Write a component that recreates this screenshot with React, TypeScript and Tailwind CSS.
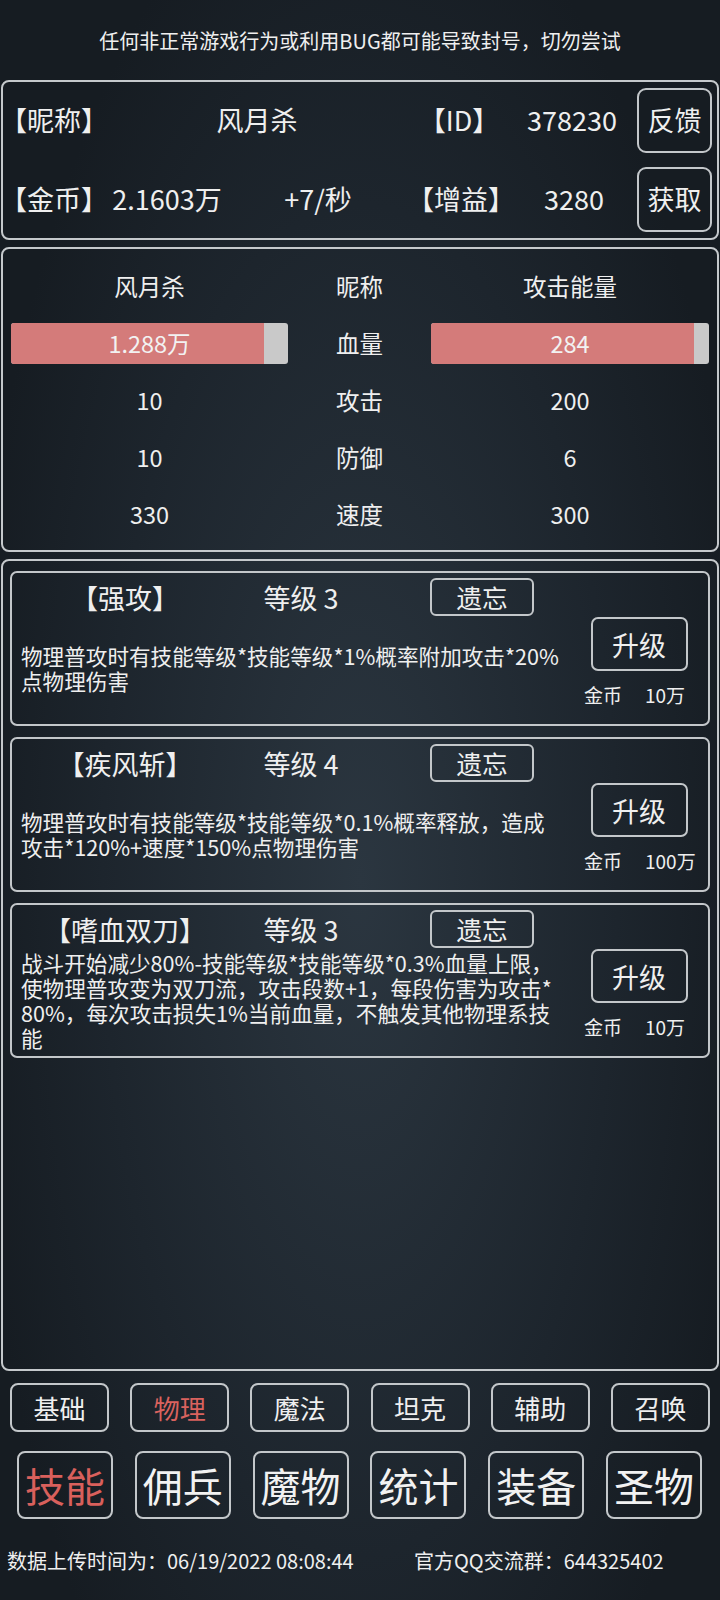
const skills = [
  {
    name: "【强攻】",
    level: 3,
    lines: ["物理普攻时有技能等级*技能等级*1%概率附加攻击*20%", "点物理伤害"],
    cost: "10万",
  },
  {
    name: "【疾风斩】",
    level: 4,
    lines: ["物理普攻时有技能等级*技能等级*0.1%概率释放，造成", "攻击*120%+速度*150%点物理伤害"],
    cost: "100万",
  },
  {
    name: "【嗜血双刀】",
    level: 3,
    lines: [
      "战斗开始减少80%-技能等级*技能等级*0.3%血量上限，",
      "使物理普攻变为双刀流，攻击段数+1，每段伤害为攻击*",
      "80%，每次攻击损失1%当前血量，不触发其他物理系技",
      "能",
    ],
    cost: "10万",
  },
];

const statRows = [
  { left: "10", label: "攻击", right: "200" },
  { left: "10", label: "防御", right: "6" },
  { left: "330", label: "速度", right: "300" },
];

const categories = ["基础", "物理", "魔法", "坦克", "辅助", "召唤"];
const mainTabs = ["技能", "佣兵", "魔物", "统计", "装备", "圣物"];

function Bar({ value, pct, width }: { value: string; pct: number; width: string }) {
  return (
    <div className={`relative h-[41px] ${width} rounded-[3px] bg-[#c9c9c9] overflow-hidden`}>
      <div className="absolute inset-y-0 left-0 bg-[#d47b7a]" style={{ width: `${pct}%` }} />
      <div className="relative h-full flex items-center justify-center text-[23.5px] text-[#f2f2f2]">{value}</div>
    </div>
  );
}

function SkillCard({ skill }: { skill: (typeof skills)[number] }) {
  return (
    <div className="h-[155px] border-2 border-[#c3c7ca] rounded-[7px] flex flex-col">
      {/* title row */}
      <div className="mt-[5px] h-[38px] flex items-center">
        <div className="w-[226px] text-center text-[27px] leading-none">{skill.name}</div>
        <div className="w-[126px] text-center text-[27px] leading-none">等级 {skill.level}</div>
        <button className="ml-[66px] w-[104px] h-[38px] border-2 border-[#c3c7ca] rounded-[6px] text-[25.5px] leading-none">
          遗忘
        </button>
      </div>
      <div className="flex-1 flex">
        <div className="flex-1 flex flex-col justify-center pl-[9px] pb-[4px] text-[21.6px] leading-[25px]">
          {skill.lines.map((l, i) => (
            <span key={i} className="block whitespace-nowrap">
              {l}
            </span>
          ))}
        </div>
        <div className="w-[120px] mr-[9px] flex flex-col">
          <button className="mt-[1px] mx-auto w-[97px] h-[54px] border-2 border-[#c3c7ca] rounded-[7px] text-[27px] leading-none">
            升级
          </button>
          <div className="mt-[13px] pl-[5px] flex text-[19px] leading-[22px]">
            <span>金币</span>
            <span className="ml-[23px]">{skill.cost}</span>
          </div>
        </div>
      </div>
    </div>
  );
}

export default function App() {
  return (
    <div className="w-[720px] h-[1600px] overflow-hidden text-[#efefef] font-['Noto_Sans_CJK_SC',sans-serif] bg-[radial-gradient(ellipse_55%_65%_at_50%_55%,#2b3640_0%,#1d252d_65%,#161c22_100%)]">
      {/* warning */}
      <div className="h-[80px] flex items-center justify-center text-[20px] pt-[2px]">
        任何非正常游戏行为或利用BUG都可能导致封号，切勿尝试
      </div>

      {/* account panel */}
      <div className="mx-[1px] border-2 border-[#c5c9cc] rounded-[8px] pt-[6px] pb-[6px] pr-[5px] flex flex-col gap-[14px] text-[27px]">
        <div className="h-[65px] flex items-center">
          <div className="w-[100px]">
            <span className="inline-block -ml-[3px]">【昵称】</span>
          </div>
          <div className="w-[308px] text-center">风月杀</div>
          <div className="w-[96px] text-center">【ID】</div>
          <div className="w-[130px] text-center">378230</div>
          <button className="ml-auto w-[75px] h-[65px] border-2 border-[#c3c7ca] rounded-[9px] text-[27px]">反馈</button>
        </div>
        <div className="h-[65px] flex items-center">
          <div className="w-[100px]">
            <span className="inline-block -ml-[3px]">【金币】</span>
          </div>
          <div className="w-[128px] text-center">2.1603万</div>
          <div className="w-[174px] text-center">+7/秒</div>
          <div className="w-[112px] text-center">【增益】</div>
          <div className="w-[114px] text-center">3280</div>
          <button className="ml-auto w-[75px] h-[65px] border-2 border-[#c3c7ca] rounded-[9px] text-[27px]">获取</button>
        </div>
      </div>

      {/* battle stats */}
      <div className="mt-[7px] mx-[1px] border-2 border-[#c5c9cc] rounded-[8px] pt-[9px] pb-[7px] pl-[8px] text-[23.5px]">
        <div className="h-[57px] flex items-center">
          <div className="w-[277px] text-center">风月杀</div>
          <div className="w-[143px] text-center">昵称</div>
          <div className="w-[278px] text-center">攻击能量</div>
        </div>
        <div className="h-[57px] flex items-center">
          <Bar value="1.288万" pct={91.3} width="w-[277px]" />
          <div className="w-[143px] text-center">血量</div>
          <Bar value="284" pct={94.6} width="w-[278px]" />
        </div>
        {statRows.map((r) => (
          <div key={r.label} className="h-[57px] flex items-center">
            <div className="w-[277px] text-center">{r.left}</div>
            <div className="w-[143px] text-center">{r.label}</div>
            <div className="w-[278px] text-center">{r.right}</div>
          </div>
        ))}
      </div>

      {/* skill list */}
      <div className="mt-[7px] mx-[1px] h-[812px] border-2 border-[#c5c9cc] rounded-[8px] pt-[10px] px-[7px] flex flex-col gap-[11px]">
        {skills.map((s) => (
          <SkillCard key={s.name} skill={s} />
        ))}
      </div>

      {/* category tabs */}
      <div className="mt-[12px] px-[10px] flex justify-between">
        {categories.map((c) => (
          <button
            key={c}
            className={`w-[99px] h-[49px] border-2 border-[#c3c7ca] rounded-[8px] text-[26px] leading-none ${
              c === "物理" ? "text-[#d9625e]" : "text-[#efefef]"
            }`}
          >
            {c}
          </button>
        ))}
      </div>

      {/* main tabs */}
      <div className="mt-[19px] pl-[17px] pr-[18px] flex justify-between">
        {mainTabs.map((t) => (
          <button
            key={t}
            className={`w-[96px] h-[68px] border-2 border-[#c3c7ca] rounded-[8px] text-[40px] leading-none ${
              t === "技能" ? "text-[#d9605c]" : "text-[#f2f2f2]"
            }`}
          >
            {t}
          </button>
        ))}
      </div>

      {/* footer */}
      <div className="mt-[30px] h-[24px] flex items-center text-[20px]">
        <span className="pl-[7px] w-[414px] shrink-0">数据上传时间为：06/19/2022 08:08:44</span>
        <span>官方QQ交流群：644325402</span>
      </div>
    </div>
  );
}
